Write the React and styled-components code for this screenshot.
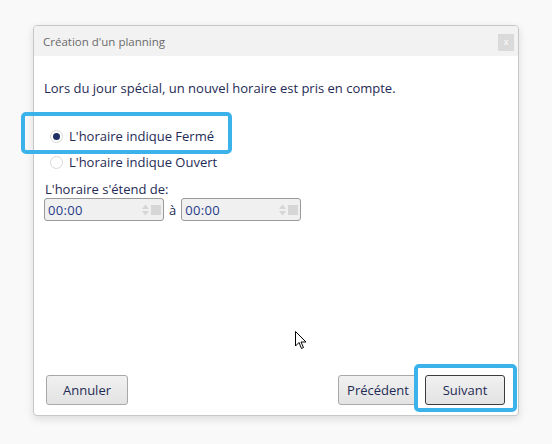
import styled, { createGlobalStyle } from 'styled-components';

const GlobalStyle = createGlobalStyle`
  html, body {
    margin: 0;
    padding: 0;
    background: #f9f9f9;
    font-family: "Open Sans", "Noto Sans", sans-serif;
  }
`;

const Page = styled.div`
  position: relative;
  width: 552px;
  height: 444px;
  padding: 25px 0 0 33px;
  box-sizing: border-box;
`;

const Dialog = styled.div`
  width: 486px;
  height: 391px;
  box-sizing: border-box;
  background: #fff;
  border: 1px solid #c8c8c8;
  border-radius: 4px;
  box-shadow: 0 3px 8px rgba(0, 0, 0, 0.12);
  display: flex;
  flex-direction: column;
  overflow: hidden;
`;

const TitleBar = styled.div`
  height: 30px;
  background: #f2f2f2;
  display: flex;
  align-items: center;
  justify-content: space-between;
  padding: 0 4px 0 9px;
  font-size: 11.5px;
  color: #6a6a6a;
`;

const CloseButton = styled.div`
  width: 16px;
  height: 17px;
  margin-top: 2px;
  background: #dadada;
  color: #fff;
  font-size: 9px;
  line-height: 16px;
  text-align: center;
`;

const Body = styled.div`
  flex: 1;
  padding: 23px 10px 0 10px;
  color: #1f2b55;
  font-size: 13px;
  line-height: 18px;
`;

const Intro = styled.div`
  margin-bottom: 26px;
`;

const RadioRow = styled.label`
  display: flex;
  align-items: center;
  gap: 6px;
  height: 26px;
  padding-left: 6px;
`;

const RadioDot = styled.span`
  width: 11px;
  height: 11px;
  border-radius: 50%;
  border: 1px solid #d8d8d8;
  background: #fff;
  display: flex;
  align-items: center;
  justify-content: center;
  &::after {
    content: '';
    width: 7px;
    height: 7px;
    border-radius: 50%;
    background: ${(p) => (p.$checked ? '#1f2e63' : 'transparent')};
  }
`;

const RangeLabel = styled.div`
  margin-top: 5px;
  padding-left: 1px;
`;

const TimeRow = styled.div`
  display: flex;
  align-items: center;
  gap: 5px;
`;

const TimeBox = styled.div`
  width: 120px;
  height: 23px;
  flex: none;
  box-sizing: border-box;
  border: 1px solid #9a9a9a;
  border-radius: 3px;
  background: #f0f0f0;
  display: flex;
  align-items: center;
  padding: 0 2px 0 3px;
  font-size: 13px;
  color: #1f3b8a;
`;

const TimeText = styled.span`
  flex: 1;
  letter-spacing: 0.3px;
`;

const Spinner = styled.svg`
  width: 20px;
  height: 14px;
`;

const Footer = styled.div`
  display: flex;
  align-items: center;
  padding: 0 13px 10px 12px;
`;

const Spacer = styled.div`
  flex: 1;
`;

const Button = styled.button`
  height: 30px;
  box-sizing: border-box;
  padding: 0 8px;
  min-width: ${(p) => p.$width || 82}px;
  border: 1px solid ${(p) => (p.$primary ? '#3c3c3c' : '#a8a8a8')};
  border-radius: 3px;
  background: linear-gradient(#f1f1f1, #e3e3e3);
  color: #1f2b55;
  font-family: "Open Sans", "Noto Sans", sans-serif;
  font-size: 13px;
  margin-left: ${(p) => p.$gap || 0}px;
`;

const Highlight = styled.div`
  position: absolute;
  box-sizing: border-box;
  border: 4px solid #3bb2ea;
  border-radius: 5px;
  left: ${(p) => p.$x}px;
  top: ${(p) => p.$y}px;
  width: ${(p) => p.$w}px;
  height: ${(p) => p.$h}px;
  pointer-events: none;
`;

const Cursor = styled.svg`
  position: absolute;
  left: 295px;
  top: 331px;
`;

function TimeInput({ value }) {
  return (
    <TimeBox>
      <TimeText>{value}</TimeText>
      <Spinner viewBox="0 0 20 14">
        <path d="M1 6 L4.5 1.5 L8 6 Z" fill="#d6d6d6" />
        <path d="M1 8 L4.5 12.5 L8 8 Z" fill="#d6d6d6" />
        <rect x="10" y="2" width="10" height="10" fill="#d6d6d6" />
      </Spinner>
    </TimeBox>
  );
}

export default function App() {
  return (
    <>
      <GlobalStyle />
      <Page>
        <Dialog>
          <TitleBar>
            <span>Création d'un planning</span>
            <CloseButton>x</CloseButton>
          </TitleBar>
          <Body>
            <Intro>Lors du jour spécial, un nouvel horaire est pris en compte.</Intro>
            <RadioRow>
              <RadioDot $checked />
              L'horaire indique Fermé
            </RadioRow>
            <RadioRow>
              <RadioDot />
              L'horaire indique Ouvert
            </RadioRow>
            <RangeLabel>L'horaire s'étend de:</RangeLabel>
            <TimeRow>
              <TimeInput value="00:00" />
              à
              <TimeInput value="00:00" />
            </TimeRow>
          </Body>
          <Footer>
            <Button>Annuler</Button>
            <Spacer />
            <Button $width={80}>Précédent</Button>
            <Button $primary $width={80} $gap={7}>Suivant</Button>
          </Footer>
        </Dialog>
        <Highlight $x={21} $y={112} $w={211} $h={42} />
        <Highlight $x={414} $y={364} $w={103} $h={48} />
        <Cursor width="12" height="19" viewBox="0 0 12 19">
          <path d="M0.5 0.5 L0.5 15 L4 11.5 L6.5 17.5 L8.5 16.5 L6 11 L11 11 Z" fill="#fff" stroke="#000" strokeWidth="1" />
        </Cursor>
      </Page>
    </>
  );
}
